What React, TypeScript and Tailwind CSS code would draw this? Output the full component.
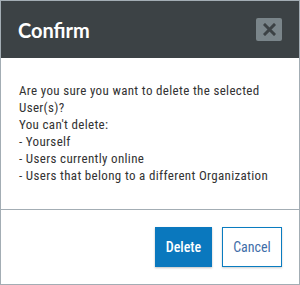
export default function App() {
  return (
    <div className="w-[300px] h-[285px] border border-[#a3adb4] bg-white flex flex-col" style={{ fontFamily: 'Roboto, "Liberation Sans", sans-serif' }}>
      <div className="h-[57px] bg-[#3c4245] flex items-center justify-between pl-[17px] pr-[17px] shrink-0">
        <div className="text-white text-[20px] font-bold leading-none" style={{ fontFamily: 'Lato, "Liberation Sans", sans-serif' }}>Confirm</div>
        <button className="w-[26px] h-[23px] bg-[#7a858a] rounded-[2px] flex items-center justify-center">
          <svg width="13" height="13" viewBox="0 0 13 13">
            <path d="M2 2 L11 11 M11 2 L2 11" stroke="#3c4245" strokeWidth="3" strokeLinecap="square" />
          </svg>
        </button>
      </div>
      <div className="flex-1 border-b border-[#a3adb4] pt-[24px] pl-[18px] pr-[10px] text-[13px] leading-[17px] text-[#333333] font-stretch-[87%] tracking-[0.33px]">
        <div>Are you sure you want to delete the selected<br />User(s)?</div>
        <div>You can't delete:</div>
        <div>- Yourself</div>
        <div>- Users currently online</div>
        <div className="whitespace-nowrap">- Users that belong to a different Organization</div>
      </div>
      <div className="h-[74px] shrink-0 flex items-center justify-end gap-[10px] pr-[17px] font-stretch-[85%]">
        <button className="w-[57px] h-[40px] bg-[#0a78be] text-white text-[14px] font-medium shadow-[0_1px_2px_rgba(0,0,0,0.25)]">Delete</button>
        <button className="w-[60px] h-[40px] bg-white border-[1.5px] border-[#0a7cc0] text-[#3f6ea8] text-[14px] shadow-[0_1px_2px_rgba(0,0,0,0.2)]">Cancel</button>
      </div>
    </div>
  );
}
